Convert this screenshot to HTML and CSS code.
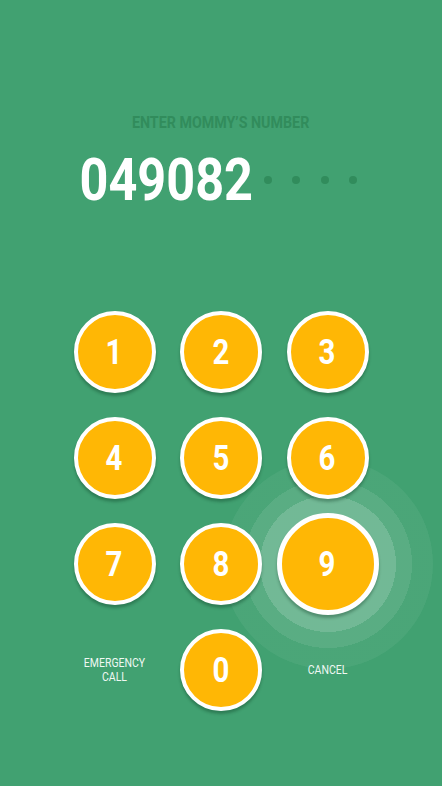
FILE: index.html
```html
<!DOCTYPE html>
<html lang="en">

<head>
    <meta charset="UTF-8">
    <meta name="viewport" content="width=device-width, initial-scale=1.0">
    <title>Enter number</title>
    <link rel="stylesheet" href="styles.css">
</head>

<body>
    <div class="screen">
        <h1 class="title"><span class="narrow">ENTER MOMMY’S NUMBER</span></h1>

        <div class="number_row">
            <span class="number narrow">049082</span>
            <div class="dots">
                <span class="dot"></span>
                <span class="dot"></span>
                <span class="dot"></span>
                <span class="dot"></span>
            </div>
        </div>

        <div class="keypad">
            <div class="cell"><button class="key"><span class="narrow">1</span></button></div>
            <div class="cell"><button class="key"><span class="narrow">2</span></button></div>
            <div class="cell"><button class="key"><span class="narrow">3</span></button></div>
            <div class="cell"><button class="key"><span class="narrow">4</span></button></div>
            <div class="cell"><button class="key"><span class="narrow">5</span></button></div>
            <div class="cell"><button class="key"><span class="narrow">6</span></button></div>
            <div class="cell"><button class="key"><span class="narrow">7</span></button></div>
            <div class="cell"><button class="key"><span class="narrow">8</span></button></div>
            <div class="cell">
                <div class="ripple"></div>
                <button class="key pressed"><span class="narrow">9</span></button>
            </div>
            <div class="cell"><span class="label narrow">EMERGENCY<br>CALL</span></div>
            <div class="cell"><button class="key"><span class="narrow">0</span></button></div>
            <div class="cell"><span class="label narrow">CANCEL</span></div>
        </div>
    </div>
</body>

</html>
```

FILE: styles.css
```css
* {
    margin: 0;
    padding: 0;
    box-sizing: border-box;
}

body {
    background: #41a171;
    font-family: Roboto, "Liberation Sans", sans-serif;
    color: white;
}

.screen {
    height: 786px;
    padding-top: 112px;
    display: flex;
    flex-direction: column;
    align-items: center;
}

/* fake the condensed face */
.narrow {
    display: inline-block;
    transform: scaleX(0.84);
}

.title {
    font-size: 17px;
    font-weight: 700;
    line-height: 20px;
    color: #318c5c;
}

.number_row {
    margin-top: 18px;
    margin-left: -8px;
    display: flex;
    align-items: center;
}

.number {
    font-size: 60px;
    font-weight: 700;
    line-height: 60px;
    margin: 0 -14px;
}

.dots {
    display: flex;
    gap: 20.5px;
    margin-left: 8px;
}

.dot {
    width: 8px;
    height: 8px;
    border-radius: 50%;
    background: #318c5c;
}

.keypad {
    margin-top: 101px;
    display: grid;
    grid-template-columns: repeat(3, 82px);
    grid-auto-rows: 82px;
    column-gap: 24.5px;
    row-gap: 24px;
}

.cell {
    position: relative;
    display: flex;
    align-items: center;
    justify-content: center;
}

.key {
    position: relative;
    z-index: 1;
    width: 82px;
    height: 82px;
    border-radius: 50%;
    border: 4px solid white;
    background: #ffb705;
    color: white;
    font-family: Roboto, "Liberation Sans", sans-serif;
    font-size: 35px;
    font-weight: 700;
    box-shadow: 0 3px 3px rgba(0, 40, 20, 0.3);
    flex-shrink: 0;
}

.key.pressed {
    width: 102px;
    height: 102px;
    border-width: 5px;
}

.ripple {
    position: absolute;
    z-index: 0;
    left: 50%;
    top: 50%;
    width: 210px;
    height: 210px;
    margin: -105px 0 0 -105px;
    border-radius: 50%;
    background: radial-gradient(circle closest-side,
            rgba(255, 255, 255, 0.26) 68px,
            rgba(255, 255, 255, 0.13) 68px 84px,
            rgba(255, 255, 255, 0.05) 84px 105px,
            transparent 105px);
}

.label {
    font-size: 12.5px;
    line-height: 14px;
    text-align: center;
    color: #f0f8f3;
}
```
